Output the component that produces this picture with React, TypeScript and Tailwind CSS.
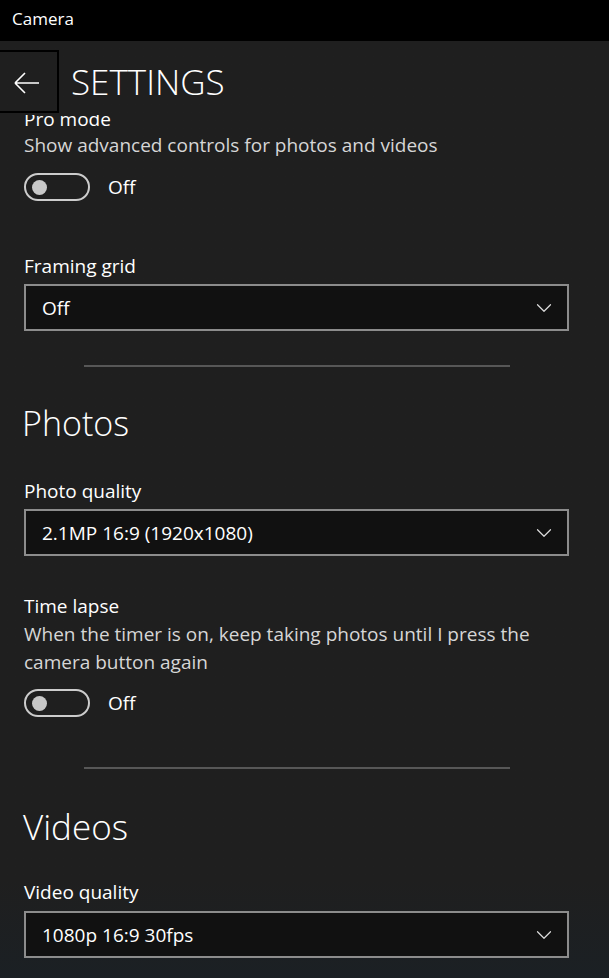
import { ChevronDown } from 'lucide-react';

const FONT = { fontFamily: '"Open Sans", "Noto Sans", sans-serif' };

// ─── Small pieces ──────────────────────────────────────────────────────────

function Toggle({ label }: { label: string }) {
  return (
    <div className="flex items-center">
      <div className="flex h-[28px] w-[66px] items-center rounded-full border-2 border-[#cccccc] pl-[6px]">
        <span className="h-[15px] w-[15px] rounded-full bg-[#c8c8c8]" />
      </div>
      <span className="ml-[18px] text-[19px] leading-[28px] text-white">{label}</span>
    </div>
  );
}

function Dropdown({ value, className = '' }: { value: string; className?: string }) {
  return (
    <div
      className={`flex h-[47px] w-[545px] items-center justify-between border-2 border-[#8c8c8c] bg-[#111111] pl-[16px] pr-[10px] ${className}`}
    >
      <span className="text-[19px] leading-[28px] text-white">{value}</span>
      <ChevronDown size={26} strokeWidth={1.1} className="text-[#dddddd]" />
    </div>
  );
}

function Divider({ className = '' }: { className?: string }) {
  return <div className={`ml-[60px] h-[2px] w-[426px] bg-[#575757] ${className}`} />;
}

// ─── Page ──────────────────────────────────────────────────────────────────

export default function App() {
  return (
    <div
      className="min-h-[978px] w-[609px] overflow-hidden bg-linear-to-b from-[#1f1f1f] from-90% to-[#1b2024]"
      style={FONT}
    >
      {/* Title bar */}
      <div className="flex h-[41px] items-center bg-black pb-[4px] pl-[12px]">
        <span className="text-[17px] text-white">Camera</span>
      </div>

      {/* Header */}
      <div className="flex h-[72px] items-start">
        <div className="mt-[9px] h-[63px] w-[59px] border-2 border-l-0 border-black">
          <svg width="57" height="59" viewBox="0 0 57 59" className="text-white">
            <path
              d="M15 31 H39 M15 31 L25 21 M15 31 L25 41"
              stroke="currentColor"
              strokeWidth="1.6"
              fill="none"
            />
          </svg>
        </div>
        <h1 className="ml-[12px] mt-[19px] text-[35px] font-light leading-[44px] text-white">SETTINGS</h1>
      </div>

      <div className="px-[24px]">
        {/* Pro mode (scrolled under the header) */}
        <div className="mt-[2px] h-[14px] overflow-hidden">
          <p className="-mt-[10px] text-[19px] leading-[28px] text-white">Pro mode</p>
        </div>
        <p className="mt-[2px] text-[19px] leading-[28px] text-[#d6d6d6]">
          Show advanced controls for photos and videos
        </p>
        <div className="mt-[14px]">
          <Toggle label="Off" />
        </div>

        <p className="mt-[51px] text-[19px] leading-[28px] text-white">Framing grid</p>
        <Dropdown value="Off" className="mt-[4px]" />

        <Divider className="mt-[34px]" />

        {/* Photos */}
        <h2 className="-ml-[2px] mt-[34px] text-[34px] font-light leading-[44px] text-white">Photos</h2>
        <p className="mt-[32px] text-[19px] leading-[28px] text-white">Photo quality</p>
        <Dropdown value="2.1MP 16:9 (1920x1080)" className="mt-[4px]" />

        <p className="mt-[36px] text-[19px] leading-[28px] text-white">Time lapse</p>
        <p className="text-[19px] leading-[28px] text-[#d6d6d6]">
          When the timer is on, keep taking photos until I press the camera button again
        </p>
        <div className="mt-[13px]">
          <Toggle label="Off" />
        </div>

        <Divider className="mt-[50px]" />

        {/* Videos */}
        <h2 className="-ml-[1px] mt-[36px] text-[35px] font-light leading-[44px] text-white">Videos</h2>
        <p className="mt-[29px] text-[19px] leading-[28px] text-white">Video quality</p>
        <Dropdown value="1080p 16:9 30fps" className="mt-[5px]" />
      </div>
    </div>
  );
}
